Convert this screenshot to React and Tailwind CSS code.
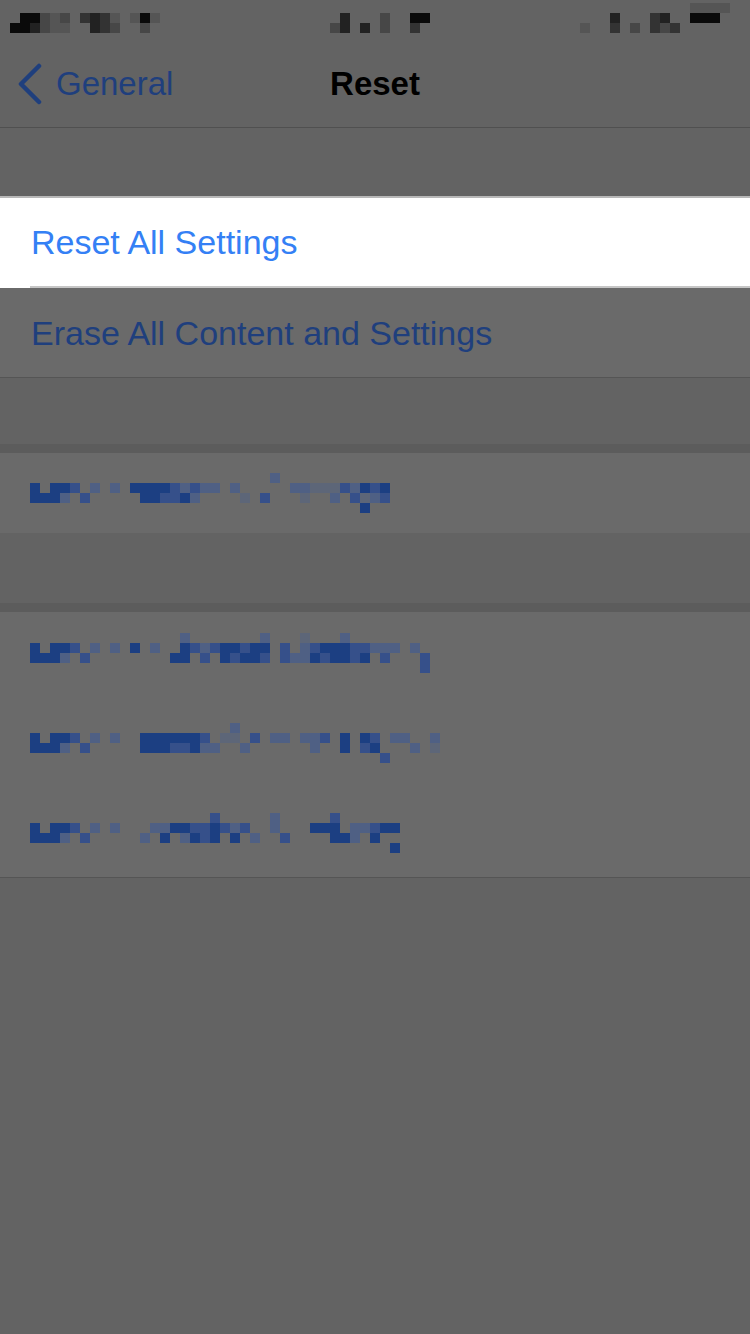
import React from "react";

// shades for the pixelated (blurred-out) row labels
const blue = { 4: "#1c3f82", 3: "#36508a", 2: "#4f6084", 1: "#5d6678" };
const grey = { k: "#0a0a0a", 1: "#222222", 2: "#333333", 3: "#474747", 4: "#555555" };

// status bar cells: [column, row, shade], 10px each
const statusCells = [
  [2, 1, "k"], [3, 1, "k"], [4, 1, "3"], [5, 1, "4"], [6, 1, "3"], [8, 1, "2"], [9, 1, "1"],
  [10, 1, "2"], [11, 1, "4"], [13, 1, "4"], [14, 1, "k"], [15, 1, "4"],
  [1, 2, "k"], [2, 2, "k"], [3, 2, "1"], [4, 2, "3"], [5, 2, "4"], [6, 2, "4"], [9, 2, "1"],
  [10, 2, "2"], [11, 2, "3"], [14, 2, "3"],
  [34, 1, "1"], [38, 1, "3"], [41, 1, "k"], [42, 1, "k"],
  [33, 2, "3"], [34, 2, "1"], [36, 2, "1"], [38, 2, "3"], [41, 2, "2"],
  [61, 1, "1"], [65, 1, "2"], [66, 1, "1"],
  [58, 2, "4"], [61, 2, "2"], [63, 2, "3"], [65, 2, "2"], [66, 2, "3"], [67, 2, "2"],
  [69, 0, "4"], [70, 0, "4"], [71, 0, "4"], [72, 0, "4"],
  [69, 1, "k"], [70, 1, "k"], [71, 1, "k"],
];

const sp = (n) => " ".repeat(n);

const rowNetwork = [
  sp(24) + "2",
  "4 443 2 2 " + "4444" + "32322" + " 2" + sp(5) + "22111" + "32434",
  "4442 3" + sp(5) + "4433" + "42" + sp(4) + "1 3   1  2 3123",
  sp(33) + "4",
];

const rowKeyboard = [
  sp(15) + "2" + sp(7) + "2" + sp(3) + "1" + sp(3) + "2",
  "4 443 2 2 " + "4 2  " + "4323443" + "44 3 " + "2344433" + "222 2",
  "4442 3" + sp(8) + "44 3 " + "43443 " + "3224344" + "34 3" + sp(3) + "3",
  sp(39) + "3",
];

const rowHome = [
  sp(20) + "2",
  "4 443 2 2 " + " 4444443" + " 11 3 22 " + "223 4 43 " + "22  2",
  "4442 3" + sp(5) + "44433422" + "  2" + sp(6) + "2  4 34" + "   2 1",
  sp(35) + "3",
];

const rowLocation = [
  sp(18) + "3" + sp(5) + "2" + sp(5) + "3",
  "4 443 2 2" + sp(3) + "2244334323" + "  2   " + "444 22344",
  "4442 3" + sp(5) + "2 4 2434 4 2" + "  3" + sp(4) + "442 4",
  sp(36) + "4",
];

function Mosaic({ rows, palette }) {
  const w = Math.max(...rows.map((r) => r.length)) * 10;
  return (
    <svg width={w} height={rows.length * 10} className="block">
      {rows.flatMap((r, y) =>
        [...r].map((ch, x) =>
          ch === " " ? null : (
            <rect key={`${x}-${y}`} x={x * 10} y={y * 10} width="10" height="10" fill={palette[ch]} />
          )
        )
      )}
    </svg>
  );
}

export default function App() {
  return (
    <div className="w-[750px] h-[1334px] bg-[#636363] font-['Liberation_Sans',Arial,sans-serif] overflow-hidden">
      <div className="h-[40px]">
        <svg width="750" height="40" className="block">
          {statusCells.map(([c, r, s]) => (
            <rect key={`${c}-${r}`} x={c * 10} y={3 + r * 10} width="10" height="10" fill={grey[s]} />
          ))}
        </svg>
      </div>

      <div className="h-[88px] grid grid-cols-3 items-center border-b border-[#505050]">
        <div className="flex items-center pl-[17px]">
          <svg width="26" height="42" viewBox="0 0 26 42" className="block">
            <path d="M22 3 L4 21 L22 39" fill="none" stroke="#1f3f7d" strokeWidth="4.5" strokeLinecap="round" strokeLinejoin="round" />
          </svg>
          <span className="ml-[13px] text-[33px] text-[#1f3f7d] leading-none">General</span>
        </div>
        <div className="flex justify-center">
          <span className="text-[33px] font-bold text-black leading-none">Reset</span>
        </div>
        <div />
      </div>

      <div className="h-[68px]" />

      <div className="bg-white border-t-2 border-[#b8b8b8]">
        <div className="h-[88px] flex items-center pl-[31px]">
          <span className="text-[34px] text-[#3480f5] leading-none">Reset All Settings</span>
        </div>
        <div className="ml-[30px] h-[2px] bg-[#c6c6c6]" />
      </div>

      <div className="bg-[#6a6a6a] border-b border-[#555555] h-[90px] flex items-center pl-[31px]">
        <span className="text-[34px] text-[#1f3f7d] leading-none">Erase All Content and Settings</span>
      </div>

      <div className="h-[66px]" />
      <div className="h-[9px] bg-[#5c5c5c]" />

      <div className="bg-[#6a6a6a] h-[80px] flex items-center pl-[30px]">
        <Mosaic rows={rowNetwork} palette={blue} />
      </div>

      <div className="h-[70px]" />
      <div className="h-[9px] bg-[#5c5c5c]" />

      <div className="bg-[#6a6a6a] border-b border-[#555555] flex flex-col gap-[50px] pl-[30px] pt-[21px] pb-[24px]">
        <Mosaic rows={rowKeyboard} palette={blue} />
        <Mosaic rows={rowHome} palette={blue} />
        <Mosaic rows={rowLocation} palette={blue} />
      </div>
    </div>
  );
}
